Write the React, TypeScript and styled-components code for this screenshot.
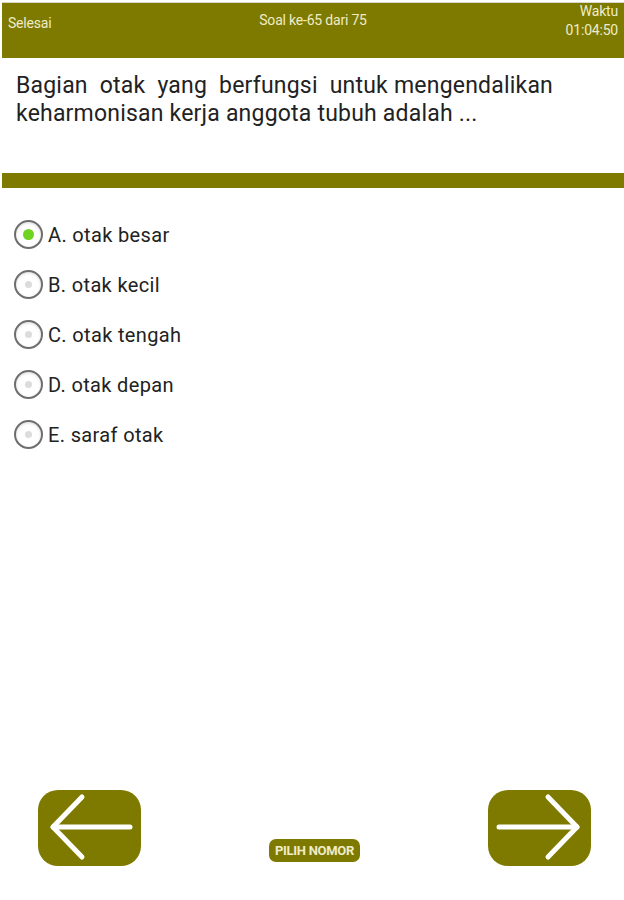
import React from "react";
import styled, { createGlobalStyle } from "styled-components";

const Global = createGlobalStyle`
  html, body { margin: 0; padding: 0; background: #ffffff; }
  body { font-family: Roboto, "Noto Sans", Arial, sans-serif; }
`;

const OLIVE = "#7e7a00";
const CREAM = "#efecc9";

const Page = styled.div`
  width: 624px;
  height: 900px;
  display: flex;
  flex-direction: column;
  padding: 2px 0 0 2px;
  box-sizing: border-box;
  overflow: hidden;
`;

const Header = styled.header`
  height: 55px;
  background: ${OLIVE};
  border-top: 1px solid #d8d8c8;
  display: grid;
  grid-template-columns: 1fr auto 1fr;
  align-items: start;
  padding: 0 6px 0 6px;
  color: ${CREAM};
  font-family: Roboto, Arial, sans-serif;
  font-size: 14px;
  letter-spacing: -0.2px;
`;

const HeaderLeft = styled.div`
  padding-top: 12px;
`;

const HeaderCenter = styled.div`
  padding-top: 9px;
`;

const Timer = styled.div`
  justify-self: end;
  text-align: right;
  line-height: 19px;
  margin-top: -1px;
`;

const Question = styled.p`
  margin: 0;
  padding: 14px 0 0 14px;
  width: 551px;
  height: 115px;
  box-sizing: border-box;
  font-size: 23px;
  line-height: 28px;
  color: #222;
  text-align: justify;
  letter-spacing: 0.2px;
`;

const Divider = styled.div`
  height: 15px;
  background: ${OLIVE};
`;

const Options = styled.div`
  display: flex;
  flex-direction: column;
  gap: 21px;
  padding: 32px 0 0 12px;
`;

const Option = styled.label`
  display: flex;
  align-items: center;
  gap: 5px;
  font-size: 20px;
  letter-spacing: 0.35px;
  color: #222;
  height: 29px;
`;

const Radio = styled.span<{ $checked?: boolean }>`
  width: 29px;
  height: 29px;
  box-sizing: border-box;
  border-radius: 50%;
  border: 2px solid #6e6e6e;
  box-shadow: inset 0 1px 3px rgba(0, 0, 0, 0.15);
  display: flex;
  align-items: center;
  justify-content: center;
  &::after {
    content: "";
    width: ${(p) => (p.$checked ? "11px" : "7px")};
    height: ${(p) => (p.$checked ? "11px" : "7px")};
    border-radius: 50%;
    background: ${(p) => (p.$checked ? "#6fd41f" : "#dcdcdc")};
  }
`;

const Spacer = styled.div`
  flex: 1;
`;

const Footer = styled.footer`
  display: flex;
  align-items: flex-end;
  justify-content: space-between;
  padding: 0 33px 34px 36px;
`;

const NavButton = styled.button`
  width: 103px;
  height: 76px;
  border: none;
  border-radius: 20px;
  background: ${OLIVE};
  display: flex;
  align-items: center;
  justify-content: center;
  padding: 0;
`;

const PickButton = styled.button`
  height: 23px;
  padding: 0 6px;
  margin-bottom: 4px;
  border: none;
  border-radius: 7px;
  background: ${OLIVE};
  color: ${CREAM};
  font-family: Roboto, Arial, sans-serif;
  font-weight: 700;
  font-size: 13px;
  letter-spacing: -0.3px;
`;

const Arrow = ({ dir }: { dir: "left" | "right" }) => (
  <svg width="103" height="76" viewBox="0 0 103 76">
    {dir === "left" ? (
      <g stroke="#ffffff" strokeWidth="5" strokeLinecap="round" fill="none">
        <line x1="15" y1="37" x2="92" y2="37" />
        <polyline points="44,7 15,37 44,67" strokeLinejoin="round" />
      </g>
    ) : (
      <g stroke="#ffffff" strokeWidth="5" strokeLinecap="round" fill="none">
        <line x1="11" y1="37" x2="89" y2="37" />
        <polyline points="60,7 89,37 60,67" strokeLinejoin="round" />
      </g>
    )}
  </svg>
);

const options = [
  "A. otak besar",
  "B. otak kecil",
  "C. otak tengah",
  "D. otak depan",
  "E. saraf otak",
];

export default function App() {
  return (
    <Page>
      <Global />
      <Header>
        <HeaderLeft>Selesai</HeaderLeft>
        <HeaderCenter>Soal ke-65 dari 75</HeaderCenter>
        <Timer>
          Waktu
          <br />
          01:04:50
        </Timer>
      </Header>
      <Question>
        Bagian&nbsp; otak&nbsp; yang&nbsp; berfungsi&nbsp; untuk mengendalikan keharmonisan kerja anggota tubuh adalah ...
      </Question>
      <Divider />
      <Options>
        {options.map((o, i) => (
          <Option key={o}>
            <Radio $checked={i === 0} />
            {o}
          </Option>
        ))}
      </Options>
      <Spacer />
      <Footer>
        <NavButton aria-label="Sebelumnya">
          <Arrow dir="left" />
        </NavButton>
        <PickButton>PILIH NOMOR</PickButton>
        <NavButton aria-label="Berikutnya">
          <Arrow dir="right" />
        </NavButton>
      </Footer>
    </Page>
  );
}
